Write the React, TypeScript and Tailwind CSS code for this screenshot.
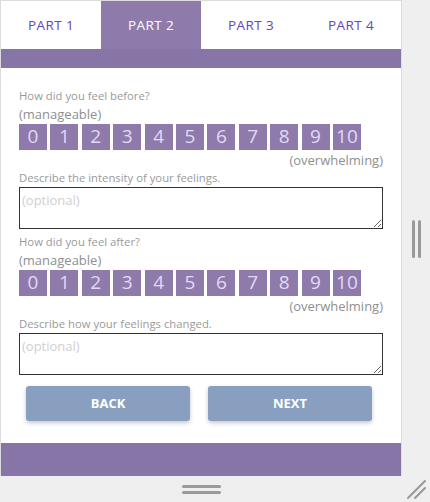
import React from "react";

const nums = [0, 1, 2, 3, 4, 5, 6, 7, 8, 9, 10];

function Scale() {
  return (
    <div className="flex h-[26px] gap-[3.4px]">
      {nums.map((n) => (
        <div
          key={n}
          className="w-[28px] h-[26px] bg-[#8e7bab] text-[#e3d8f6] text-[19px] leading-[25px] text-center"
        >
          {n}
        </div>
      ))}
    </div>
  );
}

function Section({ title, describe }: { title: string; describe: string }) {
  return (
    <div className="flex flex-col">
      <div className="text-[11.3px] leading-[16px] h-[16px] text-[#9a9a9a]">{title}</div>
      <div className="text-[13px] leading-[20px] h-[20px] text-[#8f8f8f]">(manageable)</div>
      <Scale />
      <div className="text-[13px] leading-[20px] h-[20px] text-[#8f8f8f] text-right">(overwhelming)</div>
      <div className="text-[11.3px] leading-[16px] h-[16px] text-[#9a9a9a]">{describe}</div>
      <textarea
        placeholder="(optional)"
        className="mt-[1px] h-[42px] w-full border border-[#333] px-[2px] py-[2px] text-[13px] leading-[20px] text-[#444] placeholder:text-[#cfcfcf] resize-y outline-none block"
        style={{ fontFamily: "'Open Sans', sans-serif" }}
      />
    </div>
  );
}

export default function App() {
  const tabs = ["PART 1", "PART 2", "PART 3", "PART 4"];
  return (
    <div
      className="w-[430px] h-[502px] bg-[#efefef] flex flex-col overflow-hidden"
      style={{ fontFamily: "'Open Sans', sans-serif" }}
    >
      <div className="flex h-[476px]">
        <div className="w-[402px] h-[476px] border-t border-l border-r border-[#dcdcdc] bg-white flex flex-col">
          <div className="grid grid-cols-4 h-[48px]">
            {tabs.map((t, i) => (
              <div
                key={t}
                className={
                  i === 1
                    ? "flex items-center justify-center bg-[#8e7bab] text-white text-[13.5px] font-medium tracking-[0.4px]"
                    : "flex items-center justify-center text-[#6a44bd] text-[13.5px] font-medium tracking-[0.4px]"
                }
              >
                {t}
              </div>
            ))}
          </div>
          <div className="h-[19px] bg-[#8775a7]" />
          <div className="flex-1 px-[18px] pt-[20px] flex flex-col">
            <Section title="How did you feel before?" describe="Describe the intensity of your feelings." />
            <div className="h-[5px]" />
            <Section title="How did you feel after?" describe="Describe how your feelings changed." />
            <div className="flex pl-[7px] gap-[18px] mt-[11px]">
              <button className="w-[164px] h-[35px] rounded-[3px] bg-[#889fbf] text-white text-[13px] font-bold shadow-[0_2px_4px_rgba(0,0,0,0.22)]">
                BACK
              </button>
              <button className="w-[164px] h-[35px] rounded-[3px] bg-[#889fbf] text-white text-[13px] font-bold shadow-[0_2px_4px_rgba(0,0,0,0.22)]">
                NEXT
              </button>
            </div>
          </div>
          <div className="h-[33px] bg-[#8775a7]" />
        </div>
        <div className="flex-1 flex items-center justify-center">
          <div className="flex gap-[3px] h-[38px] mt-[1px]">
            <div className="w-[3px] h-full rounded-full bg-[#9a9a9a]" />
            <div className="w-[3px] h-full rounded-full bg-[#9a9a9a]" />
          </div>
        </div>
      </div>
      <div className="flex-1 relative flex items-center">
        <div className="w-[402px] flex flex-col items-center gap-[3px]">
          <div className="w-[39px] h-[3px] rounded-full bg-[#9a9a9a]" />
          <div className="w-[39px] h-[3px] rounded-full bg-[#9a9a9a]" />
        </div>
        <svg className="absolute right-[3px] bottom-[2px]" width="22" height="22" viewBox="0 0 22 22">
          <line x1="3" y1="20" x2="20" y2="3" stroke="#999" strokeWidth="2" strokeLinecap="round" />
          <line x1="10" y1="20" x2="20" y2="10" stroke="#999" strokeWidth="2" strokeLinecap="round" />
        </svg>
      </div>
    </div>
  );
}
